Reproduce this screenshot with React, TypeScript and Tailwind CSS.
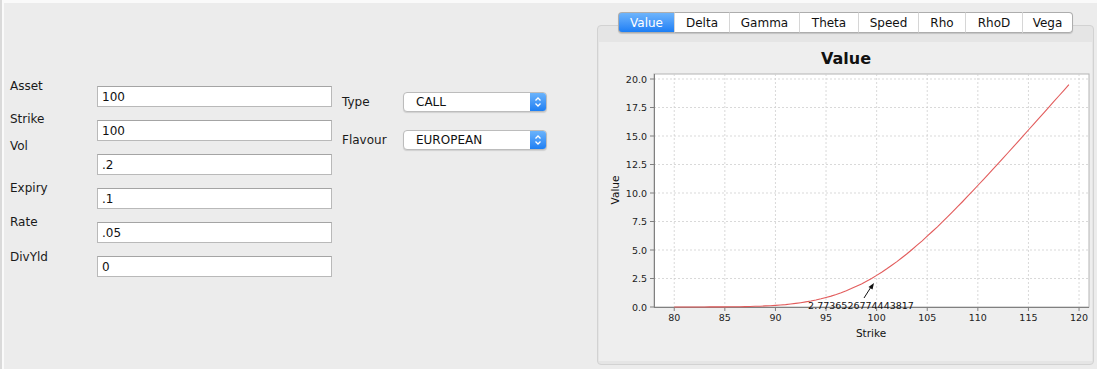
import React from 'react';

const FONT = { fontFamily: '"DejaVu Sans", "Liberation Sans", sans-serif' };

// Black-Scholes call value, the curve in the chart
const ncdf = (x: number) => {
  const t = 1 / (1 + 0.2316419 * Math.abs(x));
  const d = 0.3989423 * Math.exp((-x * x) / 2);
  const p = d * t * (0.3193815 + t * (-0.3565638 + t * (1.781478 + t * (-1.821256 + t * 1.330274))));
  return x > 0 ? 1 - p : p;
};

const callValue = (S: number) => {
  const K = 100, v = 0.2, T = 0.1, r = 0.05;
  const d1 = (Math.log(S / K) + (r + (v * v) / 2) * T) / (v * Math.sqrt(T));
  const d2 = d1 - v * Math.sqrt(T);
  return S * ncdf(d1) - K * Math.exp(-r * T) * ncdf(d2);
};

// plot coordinates (page pixels)
const PX = (s: number) => 654 + (s - 78) * 10.12;
const PY = (v: number) => 307 - v * 11.4;

const fields = [
  { label: 'Asset', value: '100', mt: 'mt-[75px]' },
  { label: 'Strike', value: '100', mt: 'mt-[17px]' },
  { label: 'Vol', value: '.2', mt: 'mt-[11px]' },
  { label: 'Expiry', value: '.1', mt: 'mt-[26px]' },
  { label: 'Rate', value: '.05', mt: 'mt-[18px]' },
  { label: 'DivYld', value: '0', mt: 'mt-[19px]' },
];

const tabs = [
  { name: 'Value', w: 'w-[56px]' },
  { name: 'Delta', w: 'w-[55px]' },
  { name: 'Gamma', w: 'w-[70px]' },
  { name: 'Theta', w: 'w-[59px]' },
  { name: 'Speed', w: 'w-[60px]' },
  { name: 'Rho', w: 'w-[47px]' },
  { name: 'RhoD', w: 'w-[57px]' },
  { name: 'Vega', w: 'w-[51px]' },
];

function Combo({ value }: { value: string }) {
  return (
    <div className="flex w-[144px] h-[20px] bg-white border border-[#bcbcbc] rounded-[4px] shadow-[0_1px_1px_rgba(0,0,0,0.12)] overflow-hidden">
      <div className="flex-1 pl-[12px] text-[12px] leading-[18px] text-[#111]">{value}</div>
      <div className="w-[16px] h-full bg-gradient-to-b from-[#6ab3fb] to-[#1c7ff3] flex items-center justify-center">
        <svg width="8" height="12" viewBox="0 0 8 12" fill="none" stroke="white" strokeWidth="1.3">
          <path d="M1.5 4.5 L4 2 L6.5 4.5" />
          <path d="M1.5 7.5 L4 10 L6.5 7.5" />
        </svg>
      </div>
    </div>
  );
}

function Chart() {
  const pts: string[] = [];
  for (let s = 80; s <= 119; s += 0.5) {
    pts.push(`${PX(s).toFixed(1)},${PY(callValue(s)).toFixed(1)}`);
  }
  const xTicks = [80, 85, 90, 95, 100, 105, 110, 115, 120];
  const yTicks = [0, 2.5, 5, 7.5, 10, 12.5, 15, 17.5, 20];
  return (
    <svg width="493" height="319" viewBox="599 42 493 319" style={FONT}>
      <text x="846" y="64" textAnchor="middle" fontSize="16" fontWeight="bold" fill="#111">Value</text>
      <rect x="654" y="74" width="435" height="233" fill="white" stroke="#b4b4b4" strokeWidth="1" />
      {xTicks.map((t) => (
        <line key={'gx' + t} x1={PX(t)} x2={PX(t)} y1="74" y2="307" stroke="#cfcfcf" strokeWidth="0.8" strokeDasharray="2 2" />
      ))}
      {yTicks.slice(1).map((t) => (
        <line key={'gy' + t} x1="654" x2="1089" y1={PY(t)} y2={PY(t)} stroke="#cfcfcf" strokeWidth="0.8" strokeDasharray="2 2" />
      ))}
      <line x1="654.5" x2="654.5" y1="74" y2="307" stroke="#808080" />
      <line x1="654" x2="1089" y1="307.5" y2="307.5" stroke="#808080" />
      {yTicks.map((t) => (
        <g key={'ty' + t}>
          <line x1="650" x2="654" y1={PY(t)} y2={PY(t)} stroke="#808080" />
          <text x="647" y={PY(t) + 3.5} textAnchor="end" fontSize="9.5" fill="#222">{t.toFixed(1)}</text>
        </g>
      ))}
      {xTicks.map((t) => (
        <g key={'tx' + t}>
          <line x1={PX(t)} x2={PX(t)} y1="307" y2="311" stroke="#808080" />
          <text x={PX(t)} y="321" textAnchor="middle" fontSize="9.5" fill="#222">{t}</text>
        </g>
      ))}
      <text x="871" y="337" textAnchor="middle" fontSize="10.5" fill="#111">Strike</text>
      <text x="619" y="190" textAnchor="middle" fontSize="10.5" fill="#111" transform="rotate(-90 619 190)">Value</text>
      <polyline points={pts.join(' ')} fill="none" stroke="#e25c5c" strokeWidth="1.1" />
      <line x1="864" y1="298" x2="871" y2="287" stroke="#111" strokeWidth="1" />
      <path d="M874 283 L868.5 287 L872.5 289.5 Z" fill="#111" />
      <text x="861" y="308.5" textAnchor="middle" fontSize="9.5" fill="#111">2.7736526774443817</text>
    </svg>
  );
}

export default function App() {
  return (
    <div className="w-[1097px] h-[369px] bg-[#fafafa] border-l-2 border-[#dadada] pl-[2px] pt-[3px] overflow-hidden" style={FONT}>
      <div className="h-full flex bg-[#ececec]">
        {/* option inputs */}
        <div className="w-[593px] flex pl-[6px]">
          <div className="w-[87px] flex flex-col">
            {fields.map((f) => (
              <div key={f.label} className={`${f.mt} h-[16px] text-[12px] leading-[16px] text-[#1a1a1a]`}>
                {f.label}
              </div>
            ))}
          </div>
          <div className="w-[235px] pt-[83px] flex flex-col gap-[13px]">
            {fields.map((f) => (
              <div
                key={f.label}
                className="h-[21px] bg-white border border-[#b9b9b9] border-t-[#a4a4a4] pl-[4px] text-[12px] leading-[21px] text-[#111]"
              >
                {f.value}
              </div>
            ))}
          </div>
          <div className="ml-[10px] pt-[89px] flex flex-col gap-[18px]">
            <div className="flex items-center h-[20px]">
              <div className="w-[61px] text-[12px] text-[#1a1a1a]">Type</div>
              <Combo value="CALL" />
            </div>
            <div className="flex items-center h-[20px]">
              <div className="w-[61px] text-[12px] text-[#1a1a1a]">Flavour</div>
              <Combo value="EUROPEAN" />
            </div>
          </div>
        </div>

        {/* greeks tabs */}
        <div className="w-[497px] pt-[9px] flex flex-col">
          <div className="relative z-10 flex self-center h-[21px] rounded-[4px] shadow-[0_1px_1px_rgba(0,0,0,0.15)]">
            {tabs.map((t, i) => (
              <div
                key={t.name}
                className={`${t.w} h-full flex items-center justify-center text-[12px] border-y border-[#adadad] ${
                  i === 0
                    ? 'rounded-l-[4px] border-l bg-gradient-to-b from-[#6db4fb] to-[#1a7ef5] border-[#2f7fe0] text-white'
                    : 'bg-white text-[#111] border-l border-l-[#d6d6d6]'
                } ${i === tabs.length - 1 ? 'rounded-r-[4px] border-r' : ''}`}
              >
                {t.name}
              </div>
            ))}
          </div>
          <div className="-mt-[8px] h-[340px] border border-[#d2d2d2] rounded-[4px] bg-[#e5e5e5] pt-[16px] px-[1px] pb-[3px]">
            <div className="w-[493px] h-[319px] bg-[#eeeeee]">
              <Chart />
            </div>
          </div>
        </div>
      </div>
    </div>
  );
}
